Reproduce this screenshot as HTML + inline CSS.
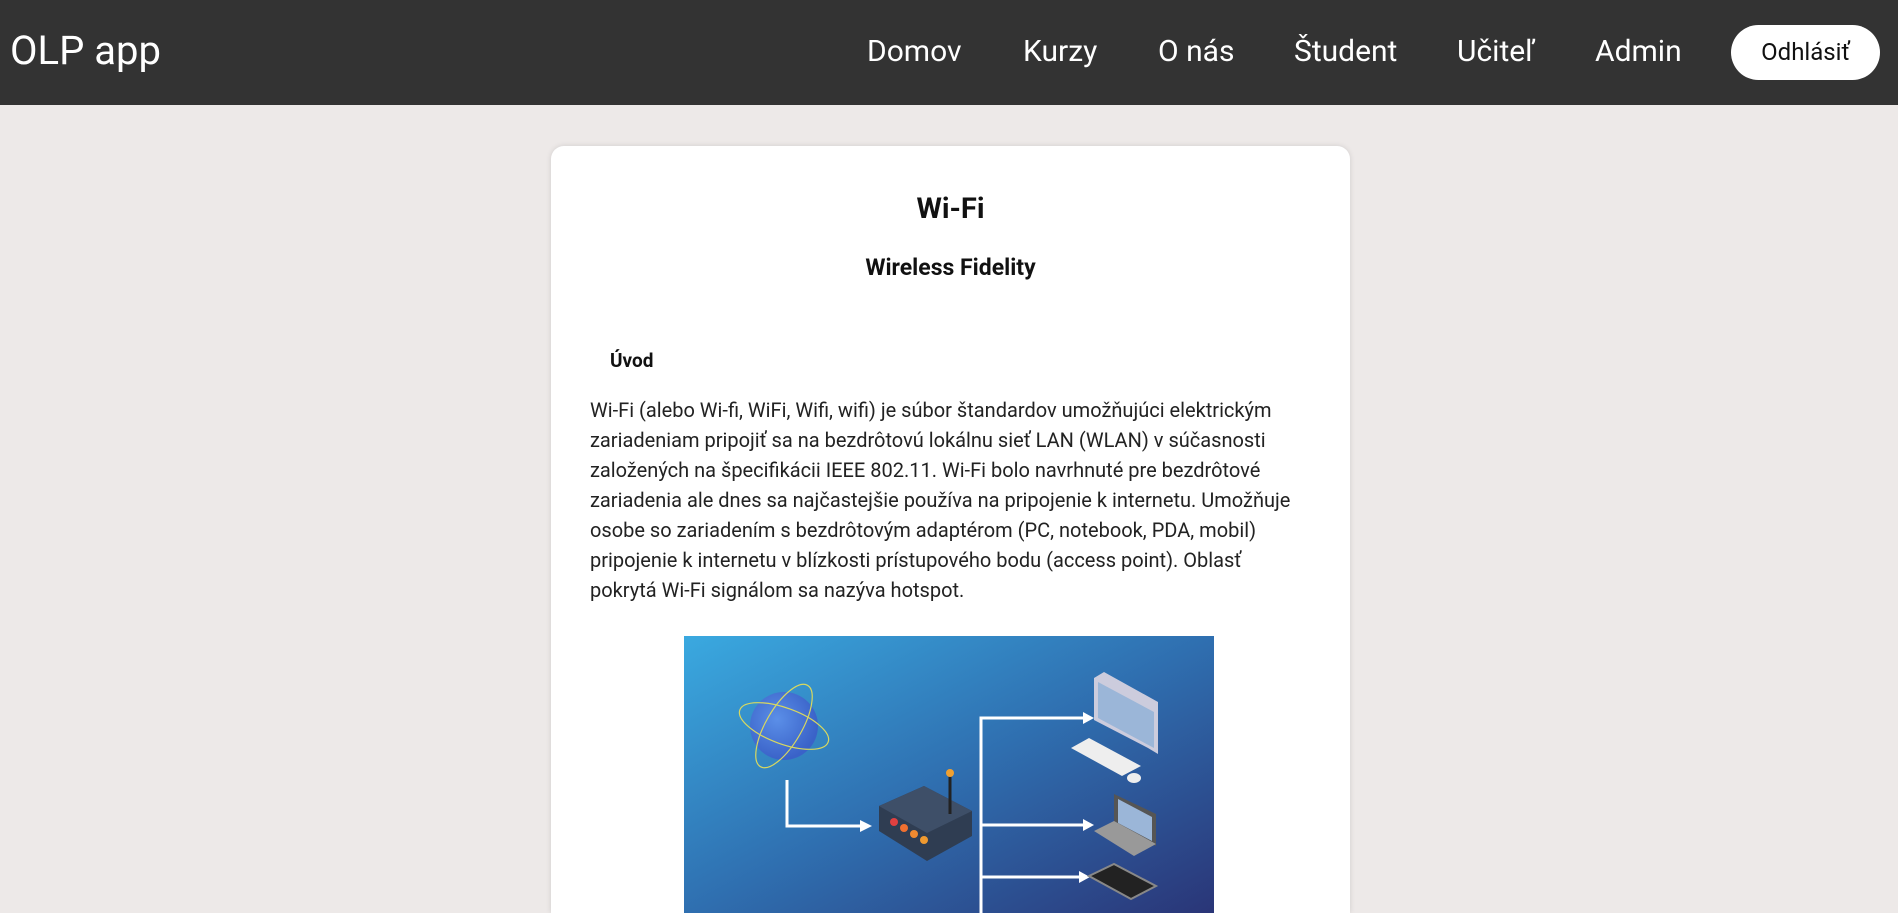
<!DOCTYPE html>
<html><head><meta charset="utf-8"><style>
*{margin:0;padding:0;box-sizing:border-box}
html,body{width:1898px;height:913px;overflow:hidden}
body{background:#ede9e8;font-family:"Roboto","Liberation Sans",sans-serif;position:relative}
.hdr{position:absolute;left:0;top:0;width:1898px;height:105px;background:#333}
.logo{position:absolute;left:10px;top:27px;color:#fff;font-size:40px}
.nav{position:absolute;top:34px;color:#fff;font-size:30px}
.btn{position:absolute;left:1731px;top:25px;width:149px;height:55px;background:#fff;border-radius:28px;color:#111;font-size:24px;text-align:center;line-height:55px}
.card{position:absolute;left:551px;top:146px;width:799px;height:767px;background:#fff;border-radius:13px 13px 0 0;box-shadow:0 0 6px rgba(0,0,0,.12)}
h1{position:absolute;left:0;width:799px;top:192px;text-align:center;font-size:29px;font-weight:bold;color:#111}
h2{position:absolute;left:0;width:799px;top:254px;text-align:center;font-size:23px;font-weight:bold;color:#111}
.uvod{position:absolute;left:610px;top:349px;font-size:19px;font-weight:bold;color:#111}
p{position:absolute;left:590px;top:395px;width:725px;font-size:20px;line-height:30px;color:#222}
.img{position:absolute;left:684px;top:636px;width:530px;height:278px}
</style></head><body>
<div class="hdr">
<div class="logo">OLP app</div>
<div class="nav" style="left:867px">Domov</div>
<div class="nav" style="left:1023px">Kurzy</div>
<div class="nav" style="left:1158px">O nás</div>
<div class="nav" style="left:1294px">Študent</div>
<div class="nav" style="left:1457px">Učiteľ</div>
<div class="nav" style="left:1595px">Admin</div>
<div class="btn">Odhlásiť</div>
</div>
<div class="card"></div>
<h1 style="left:551px">Wi-Fi</h1>
<h2 style="left:551px">Wireless Fidelity</h2>
<div class="uvod">Úvod</div>
<p>Wi-Fi (alebo Wi-fi, WiFi, Wifi, wifi) je súbor štandardov umožňujúci elektrickým<br>zariadeniam pripojiť sa na bezdrôtovú lokálnu sieť LAN (WLAN) v súčasnosti<br>založených na špecifikácii IEEE 802.11. Wi-Fi bolo navrhnuté pre bezdrôtové<br>zariadenia ale dnes sa najčastejšie používa na pripojenie k internetu. Umožňuje<br>osobe so zariadením s bezdrôtovým adaptérom (PC, notebook, PDA, mobil)<br>pripojenie k internetu v blízkosti prístupového bodu (access point). Oblasť<br>pokrytá Wi-Fi signálom sa nazýva hotspot.</p>
<svg class="img" viewBox="0 0 530 278">
<defs><linearGradient id="g" x1="0" y1="0" x2="1" y2="1"><stop offset="0" stop-color="#3aa9e0"/><stop offset="0.5" stop-color="#2f6fb0"/><stop offset="1" stop-color="#2a3577"/></linearGradient>
<radialGradient id="gl" cx=".4" cy=".4" r=".6"><stop offset="0" stop-color="#5b8fe8"/><stop offset="1" stop-color="#3a62c8"/></radialGradient></defs>
<rect width="530" height="278" fill="url(#g)"/>
<circle cx="100" cy="90" r="34" fill="url(#gl)"/>
<ellipse cx="100" cy="90" rx="47" ry="18" fill="none" stroke="#d8d860" stroke-width="1.2" transform="rotate(20 100 90)"/>
<ellipse cx="100" cy="90" rx="47" ry="18" fill="none" stroke="#d8d860" stroke-width="1.2" transform="rotate(-60 100 90)"/>
<polyline points="103,144 103,190 178,190" fill="none" stroke="#fff" stroke-width="3"/>
<polygon points="188,190 176,184 176,196" fill="#fff"/>
<polygon points="195,170 240,150 288,175 288,200 243,225 195,195" fill="#2f3d52"/>
<polygon points="195,170 240,150 288,175 243,197" fill="#3e4f68"/>
<circle cx="210" cy="186" r="4" fill="#e04040"/><circle cx="220" cy="192" r="4" fill="#f07030"/><circle cx="230" cy="198" r="4" fill="#f08a30"/><circle cx="240" cy="204" r="4" fill="#f09a30"/>
<line x1="266" y1="140" x2="266" y2="178" stroke="#222" stroke-width="3"/><circle cx="266" cy="137" r="4" fill="#f0a030"/>
<polyline points="297,278 297,82 402,82" fill="none" stroke="#fff" stroke-width="3"/>
<line x1="297" y1="189" x2="402" y2="189" stroke="#fff" stroke-width="3"/>
<line x1="297" y1="241" x2="398" y2="241" stroke="#fff" stroke-width="3"/>
<polygon points="410,82 399,76 399,88" fill="#fff"/><polygon points="410,189 399,183 399,195" fill="#fff"/><polygon points="406,241 395,235 395,247" fill="#fff"/>
<polygon points="410,42 420,36 474,66 474,118 464,112 410,84" fill="#ccd"/>
<polygon points="414,46 470,76 470,112 414,82" fill="#9bb6d8"/>
<polygon points="387,112 405,102 457,130 438,140" fill="#eee"/>
<ellipse cx="450" cy="142" rx="7" ry="5" fill="#eee"/>
<polygon points="430,158 472,178 472,210 430,190" fill="#555"/><polygon points="434,163 468,181 468,205 434,187" fill="#9bb6d8"/>
<polygon points="410,195 430,185 472,208 450,220" fill="#999"/>
<polygon points="405,240 430,228 472,250 447,263" fill="#222" stroke="#888" stroke-width="2"/>
</svg>
</body></html>
